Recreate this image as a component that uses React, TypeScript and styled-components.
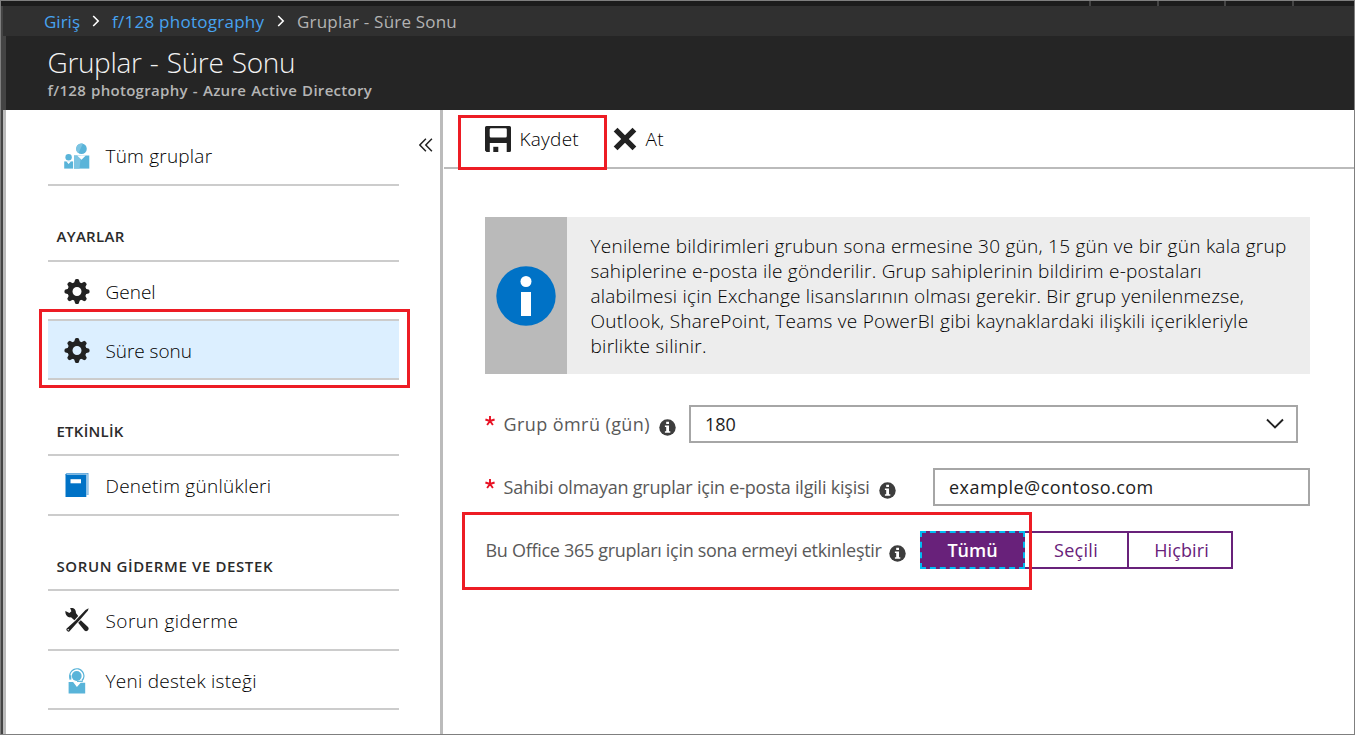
import React from "react";
import styled, { createGlobalStyle } from "styled-components";

const Global = createGlobalStyle`
  * { box-sizing: border-box; }
  body { margin: 0; font-family: "Open Sans", "Noto Sans", sans-serif; background: #fff; }
`;

const Shell = styled.div`
  width: 1355px;
  height: 735px;
  border: 1px solid #7f7f7f;
  background: #444;
  display: flex;
  flex-direction: column;
  overflow: hidden;
`;

const TopStrip = styled.div`
  height: 5px;
  flex: none;
  background: #1c1c1c;
  display: flex;
  justify-content: flex-end;
  padding-right: 60px;
  gap: 65.7px;
`;
const StripTick = styled.i`
  width: 2px;
  height: 5px;
  background: #444;
`;

const Breadcrumb = styled.nav`
  height: 30px;
  flex: none;
  margin-left: 2px;
  padding-left: 41px;
  display: flex;
  align-items: center;
  background: #303030;
  font-size: 17px;
`;
const Crumb = styled.span<{ $link?: boolean; $ls: number; $w: number }>`
  color: ${(p) => (p.$link ? "#47a3f0" : "#b3b3b3")};
  letter-spacing: ${(p) => p.$ls}px;
  width: ${(p) => p.$w}px;
  white-space: nowrap;
`;
const CrumbArrow = styled.svg`
  width: 8px;
  height: 12px;
  margin-right: 12px;
  flex: none;
`;

const Header = styled.header`
  height: 74px;
  flex: none;
  margin-left: 2px;
  border-left: 3px solid #444;
  background: #252525;
  padding: 6px 0 0 41.5px;
`;
const Title = styled.h1`
  margin: 0;
  font-size: 28px;
  line-height: 40px;
  font-weight: 300;
  letter-spacing: -0.35px;
  word-spacing: 1.4px;
  color: #f2f2f2;
`;
const Subtitle = styled.div`
  font-size: 15px;
  line-height: 16px;
  font-weight: 600;
  letter-spacing: 0.3px;
  word-spacing: 0.8px;
  color: #b5b5b5;
`;

const Body = styled.div`
  flex: 1;
  min-height: 0;
  margin-left: 2px;
  border-left: 3px solid #bbb;
  background: #fff;
  display: flex;
`;

const Sidebar = styled.aside`
  width: 437px;
  flex: none;
  border-right: 3px solid #bbb;
  padding-left: 42px;
  display: flex;
`;
const Nav = styled.div`
  width: 351px;
`;
const NavItem = styled.div<{ $h: number; $active?: boolean; $top?: number }>`
  position: relative;
  height: ${(p) => p.$h}px;
  padding: ${(p) => p.$top ?? 0}px 0 0 15.5px;
  display: flex;
  align-items: center;
  gap: 16px;
  background: ${(p) => (p.$active ? "#dcefff" : "transparent")};
  border-bottom: 2px solid #ccc;
`;
const NavLabel = styled.span<{ $ls: number }>`
  font-size: 19px;
  line-height: 24px;
  font-weight: 300;
  letter-spacing: ${(p) => p.$ls}px;
  color: #000;
  white-space: nowrap;
`;
const NavIcon = styled.svg`
  width: 26px;
  height: 26px;
  flex: none;
`;
const Section = styled.div<{ $h: number; $ls: number; $pb?: number }>`
  height: ${(p) => p.$h}px;
  border-bottom: 2px solid #ccc;
  padding: 0 0 ${(p) => p.$pb ?? 13}px 8.5px;
  display: flex;
  align-items: flex-end;
  font-size: 15px;
  line-height: 20px;
  font-weight: 600;
  letter-spacing: ${(p) => p.$ls}px;
  color: #2b2b2b;
  white-space: nowrap;
`;
const Collapse = styled.svg`
  width: 14px;
  height: 14px;
  margin: 28px 0 0 20px;
`;

const Highlight = styled.div<{ $x: number; $y: number; $w: number; $h: number }>`
  position: absolute;
  left: ${(p) => p.$x}px;
  top: ${(p) => p.$y}px;
  width: ${(p) => p.$w}px;
  height: ${(p) => p.$h}px;
  border: 3px solid #ed1c24;
  pointer-events: none;
  z-index: 2;
`;

const Content = styled.main`
  flex: 1;
  min-width: 0;
  padding-left: 1px;
`;
const Toolbar = styled.div`
  position: relative;
  height: 59px;
  border-bottom: 2px solid #bbb;
  padding-left: 41px;
  display: flex;
  align-items: center;
`;
const ToolButton = styled.div<{ $w: number; $ls: number }>`
  width: ${(p) => p.$w}px;
  height: 57px;
  display: flex;
  align-items: center;
  gap: 8.5px;
  font-size: 19px;
  font-weight: 300;
  letter-spacing: ${(p) => p.$ls}px;
  color: #000;
  white-space: nowrap;
`;

const InfoPanel = styled.section`
  margin: 48px 0 0 41px;
  width: 825px;
  height: 157px;
  display: flex;
  background: #ededed;
`;
const InfoIconCell = styled.div`
  width: 82px;
  display: flex;
  align-items: center;
  justify-content: center;
  background: #bababa;
`;
const InfoText = styled.div`
  padding: 17px 0 0 23.5px;
`;
const InfoLine = styled.div<{ $ls: number }>`
  font-size: 19px;
  line-height: 25px;
  font-weight: 300;
  letter-spacing: ${(p) => p.$ls}px;
  color: #000;
  white-space: nowrap;
`;

const FormRow = styled.div<{ $mt: number }>`
  position: relative;
  height: 38px;
  margin: ${(p) => p.$mt}px 0 0 41px;
  display: flex;
  align-items: center;
`;
const Star = styled.svg`
  width: 10px;
  height: 10px;
  margin: 0 8px 6px 0;
  flex: none;
`;
const FieldLabel = styled.label<{ $w: number; $ls: number }>`
  width: ${(p) => p.$w}px;
  padding-left: 0.5px;
  font-size: 18px;
  letter-spacing: ${(p) => p.$ls}px;
  color: #595959;
  white-space: nowrap;
`;
const InfoDot = styled.svg<{ $mr: number }>`
  width: 17px;
  height: 17px;
  margin: 6px ${(p) => p.$mr}px 0 0;
  flex: none;
`;
const Field = styled.div<{ $w: number; $ls: number }>`
  width: ${(p) => p.$w}px;
  height: 38px;
  border: 2px solid #a6a6a6;
  padding: 0 12px 0 14px;
  display: flex;
  align-items: center;
  justify-content: space-between;
  font-size: 18px;
  letter-spacing: ${(p) => p.$ls}px;
  color: #222;
`;
const Toggle = styled.div`
  display: flex;
  height: 38px;
`;
const Option = styled.div<{ $w: number; $selected?: boolean; $ls: number; $pl?: number }>`
  width: ${(p) => p.$w}px;
  height: 38px;
  padding-left: ${(p) => p.$pl ?? 0}px;
  display: flex;
  align-items: center;
  justify-content: center;
  font-size: 18px;
  letter-spacing: ${(p) => p.$ls}px;
  font-weight: ${(p) => (p.$selected ? 600 : 400)};
  color: ${(p) => (p.$selected ? "#fff" : "#68217a")};
  background: ${(p) => (p.$selected ? "#68217a" : "#fff")};
  border: 2px ${(p) => (p.$selected ? "dashed #00bcf2" : "solid #68217a")};
  & + & { border-left-width: 0; }
`;

const Arrow = () => (
  <CrumbArrow viewBox="0 0 8 12">
    <path d="M1.2 1l5 5-5 5" fill="none" stroke="#fff" strokeWidth="1.6" />
  </CrumbArrow>
);

const teeth = [0, 45, 90, 135, 180, 225, 270, 315];
const Gear = () => (
  <NavIcon viewBox="0 0 26 26" fill="#222">
    <circle cx="13" cy="12.5" r="7" fill="none" stroke="#222" strokeWidth="5" />
    {teeth.map((a) => (
      <path key={a} transform={`translate(0 -.5) rotate(${a} 13 13)`} d="M9.9 5L11.2 1Q13 -.1 14.8 1L16.1 5z" />
    ))}
  </NavIcon>
);

const GroupIcon = () => (
  <NavIcon viewBox="0 0 26 26">
    <circle cx="17.5" cy="5.7" r="5.3" fill="#59b4d9" />
    <path d="M17.5.4a5.3 5.3 0 0 0-3 9.7L19 .6a5 5 0 0 0-1.5-.2z" fill="#7cc4e2" />
    <path d="M10 12.5h15.3V25.6H10z" fill="#59b4d9" />
    <path d="M10 12.5h7L15.5 25.6H10z" fill="#7cc4e2" />
    <path d="M13.2 12.4h8.6l-4.3 4.4z" fill="#fff" />
    <circle cx="4.6" cy="14.3" r="3.2" fill="#59b4d9" />
    <path d="M.2 18.4h8.9v7.2H.2z" fill="#59b4d9" />
    <path d="M2.2 18.3h4.8l-2.4 2.6z" fill="#fff" />
  </NavIcon>
);

const BookIcon = () => (
  <NavIcon viewBox="0 0 26 26">
    <path d="M1.5 1.2L2.5 0H24.500V22H22.500V2.300H1.500z" fill="#5ea6dc" />
    <path d="M1.5 1.2H22.300V24H1.500z" fill="#0072c6" />
    <path d="M2.6 1.3H23.200V21.800" fill="none" stroke="#d5e9f7" strokeWidth=".7" />
    <path d="M6.5 6.2H17V10.300H6.500z" fill="#fff" />
  </NavIcon>
);

const ToolsIcon = () => (
  <NavIcon viewBox="0 0 26 26" fill="#222">
    <g transform="translate(0 -1)">
      <path d="M1.4 4.1l4 1.900 2-1.800L6.100.900c3.400-.600 6.200 1.800 5.800 5.200l2.300 2.800-3.800 4.400-3.400-3C4 11 1 8 1.400 4.100z" />
      <path d="M24.600 1.200l-.600 2.300-8 9.200-4 4.400L5.300 24.400c-1.200 1.100-3.900-1.300-2.600-2.800l8.600-7.800L21.500 3z" />
      <path d="M14.200 15.800l2.600-2.600L24 20c2 2.200-1.200 5.600-3.500 3.500z" />
      <circle cx="4.2" cy="22.8" r=".7" fill="#fff" />
    </g>
  </NavIcon>
);

const SupportIcon = () => (
  <NavIcon viewBox="0 0 26 26">
    <path d="M6.200 10A7 7 0 1 1 18 12.600" fill="none" stroke="#59b4d9" strokeWidth="1.4" />
    <path d="M5.300 7.300h2v4.300h-2z" fill="#59b4d9" />
    <circle cx="12.7" cy="8" r="4.9" fill="#59b4d9" />
    <path d="M13 13.300h5.800" stroke="#59b4d9" strokeWidth="1.2" />
    <path d="M4.600 14h4.500l3.800 5 3.800-4.200h4.500v10.800H4.600z" fill="#59b4d9" />
  </NavIcon>
);

const SaveIcon = () => (
  <svg width="26" height="26" viewBox="0 0 26 26">
    <path
      fillRule="evenodd"
      fill="#222"
      d="M1.5 0h23A1.5 1.5 0 0 1 26 1.5v23A1.5 1.5 0 0 1 24.5 26H21.7V17H4.8v9H1.5L0 24.5v-23A1.5 1.5 0 0 1 1.5 0zM6 2.2Q4.7 2.2 4.7 3.5V10Q4.7 11.5 6 11.5H20.5Q21.8 11.5 21.8 10V3.5Q21.8 2.2 20.5 2.2z"
    />
    <path d="M8.3 20.8h5V26h-5z" fill="#222" />
  </svg>
);

const DiscardIcon = () => (
  <svg width="24" height="24" viewBox="0 0 24 24">
    <path d="M2.6 2.6l18.8 18.8M21.4 2.6L2.6 21.4" stroke="#222" strokeWidth="5.4" />
  </svg>
);

const Info = ({ mr }: { mr: number }) => (
  <InfoDot $mr={mr} viewBox="0 0 17 17">
    <circle cx="8.5" cy="8.5" r="8.2" fill="#3d3d3d" />
    <path d="M7.200 2.800h2.800v2.300H7.200zM5.900 6.500H10v5.700h1.300v1.500H5.900v-1.500h1.300V8H5.900z" fill="#fff" />
  </InfoDot>
);

const Required = () => (
  <Star viewBox="0 0 10 10">
    <path d="M5 5V0M5 5L.4 3.5M5 5l4.6-1.5M5 5L2.1 9M5 5l2.9 4" stroke="#e81123" strokeWidth="1.9" />
  </Star>
);

export default function App() {
  return (
    <Shell>
      <Global />
      <TopStrip>
        <StripTick />
        <StripTick />
        <StripTick />
        <StripTick />
      </TopStrip>
      <Breadcrumb>
        <Crumb $link $ls={0} $w={48}>Giriş</Crumb>
        <Arrow />
        <Crumb $link $ls={0.26} $w={165}>f/128 photography</Crumb>
        <Arrow />
        <Crumb $ls={0.2} $w={180}>Gruplar - Süre Sonu</Crumb>
      </Breadcrumb>
      <Header>
        <Title>Gruplar - Süre Sonu</Title>
        <Subtitle>f/128 photography - Azure Active Directory</Subtitle>
      </Header>
      <Body>
        <Sidebar>
          <Nav>
            <NavItem $h={76} $top={18}>
              <GroupIcon />
              <NavLabel $ls={0.21}>Tüm gruplar</NavLabel>
            </NavItem>
            <Section $h={76} $ls={0.3} $pb={14}>AYARLAR</Section>
            <NavItem $h={59} $top={2}>
              <Gear />
              <NavLabel $ls={0}>Genel</NavLabel>
            </NavItem>
            <NavItem $h={59} $active $top={3}>
              <Gear />
              <NavLabel $ls={-0.05}>Süre sonu</NavLabel>
              <Highlight $x={-9} $y={-12} $w={371} $h={79} />
            </NavItem>
            <Section $h={76} $ls={0.25}>ETKİNLİK</Section>
            <NavItem $h={60} $top={2}>
              <BookIcon />
              <NavLabel $ls={0.25}>Denetim günlükleri</NavLabel>
            </NavItem>
            <Section $h={75} $ls={0.61}>SORUN GİDERME VE DESTEK</Section>
            <NavItem $h={60} $top={2}>
              <ToolsIcon />
              <NavLabel $ls={0.46}>Sorun giderme</NavLabel>
            </NavItem>
            <NavItem $h={59} $top={3}>
              <SupportIcon />
              <NavLabel $ls={0.26}>Yeni destek isteği</NavLabel>
            </NavItem>
          </Nav>
          <Collapse viewBox="0 0 14 14">
            <path d="M6.900.800L.800 7l6.100 6.200M12.900.800L6.800 7l6.100 6.200" fill="none" stroke="#222" strokeWidth="1.5" />
          </Collapse>
        </Sidebar>
        <Content>
          <Toolbar>
            <ToolButton $w={128} $ls={0.25}>
              <SaveIcon />
              Kaydet
            </ToolButton>
            <ToolButton $w={60} $ls={0.3}>
              <DiscardIcon />
              At
            </ToolButton>
            <Highlight $x={14} $y={5} $w={149} $h={55} />
          </Toolbar>
          <InfoPanel>
            <InfoIconCell>
              <svg width="60" height="60" viewBox="0 0 60 60">
                <circle cx="30" cy="30" r="29.7" fill="#0072c6" />
                <circle cx="30" cy="15.5" r="5.5" fill="#fff" />
                <path d="M25 26h10v24H25z" fill="#fff" />
              </svg>
            </InfoIconCell>
            <InfoText>
              <InfoLine $ls={0.26}>Yenileme bildirimleri grubun sona ermesine 30 gün, 15 gün ve bir gün kala grup</InfoLine>
              <InfoLine $ls={0.225}>sahiplerine e-posta ile gönderilir. Grup sahiplerinin bildirim e-postaları</InfoLine>
              <InfoLine $ls={0.21}>alabilmesi için Exchange lisanslarının olması gerekir. Bir grup yenilenmezse,</InfoLine>
              <InfoLine $ls={0.25}>Outlook, SharePoint, Teams ve PowerBI gibi kaynaklardaki ilişkili içerikleriyle</InfoLine>
              <InfoLine $ls={0.27}>birlikte silinir.</InfoLine>
            </InfoText>
          </InfoPanel>
          <FormRow $mt={31}>
            <Required />
            <FieldLabel $w={156} $ls={0.42}>Grup ömrü (gün)</FieldLabel>
            <Info mr={13} />
            <Field $w={609} $ls={0}>
              180
              <svg width="18" height="12" viewBox="0 0 18 12">
                <path d="M1 1.5l8 8 8-8" fill="none" stroke="#222" strokeWidth="1.9" />
              </svg>
            </Field>
          </FormRow>
          <FormRow $mt={25}>
            <Required />
            <FieldLabel $w={376} $ls={-0.21}>Sahibi olmayan gruplar için e-posta ilgili kişisi</FieldLabel>
            <Info mr={37} />
            <Field $w={377} $ls={0.46}>example@contoso.com</Field>
          </FormRow>
          <FormRow $mt={25}>
            <FieldLabel $w={404} $ls={-0.3}>Bu Office 365 grupları için sona ermeyi etkinleştir</FieldLabel>
            <Info mr={14} />
            <Toggle>
              <Option $w={105} $selected $ls={0}>Tümü</Option>
              <Option $w={104} $ls={0.3}>Seçili</Option>
              <Option $w={104} $ls={0.1} $pl={3}>Hiçbiri</Option>
            </Toggle>
            <Highlight $x={-23} $y={-19} $w={570} $h={78} />
          </FormRow>
        </Content>
      </Body>
    </Shell>
  );
}
